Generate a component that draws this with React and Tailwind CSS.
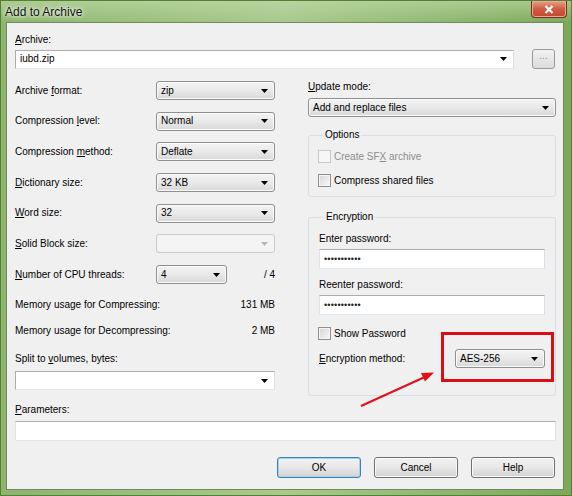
import React from "react"

const FONT = "font-['Liberation_Sans',Arial,sans-serif]"

function Arrow({ disabled }) {
  return (
    <svg width="7" height="4" viewBox="0 0 7 4" className="shrink-0">
      <path d="M0 0h7L3.5 4z" fill={disabled ? "#b5b5b5" : "#000"} />
    </svg>
  )
}

// drop list (read only) combo, Win7 look
function DropList({ value, className = "", disabled }) {
  return (
    <div
      className={`h-[19px] flex items-center justify-between pl-[4px] pr-[6px] rounded-[3px] border ${
        disabled
          ? "border-[#c9cbcd] bg-[#f4f4f4]"
          : "border-[#8e8f8f] bg-gradient-to-b from-[#f3f3f3] via-[#e9e9e9] to-[#d8d8d8] shadow-[inset_0_0_0_1px_#fbfbfb]"
      } ${className}`}
    >
      <span className="leading-[12px]">{value}</span>
      <Arrow disabled={disabled} />
    </div>
  )
}

// editable combo
function EditCombo({ value, className = "" }) {
  return (
    <div className={`h-[19px] flex items-center justify-between pl-[4px] pr-[6px] bg-white border border-[#abadb3] border-b-[#e3e9ef] border-r-[#dbdfe6] ${className}`}>
      <span className="leading-[12px]">{value}</span>
      <Arrow />
    </div>
  )
}

function TextBox({ value = "", className = "" }) {
  return (
    <div className={`h-[20px] flex items-center pl-[4px] bg-white border border-[#abadb3] border-b-[#e3e9ef] border-r-[#dbdfe6] border-l-[#e2e3ea] ${className}`}>
      <span className="text-[9px] tracking-[0.2px] leading-[10px] text-[#222]">{value}</span>
    </div>
  )
}

function Check({ label, disabled }) {
  return (
    <div className="h-[13px] flex items-center gap-[3px]">
      <div
        className={`w-[13px] h-[13px] border ${
          disabled
            ? "border-[#c8c8c8] bg-[#f6f6f6]"
            : "border-[#8e8f8f] bg-gradient-to-br from-[#d6d6d6] to-[#f8f8f8] shadow-[inset_0_0_0_1px_#f4f4f4]"
        }`}
      />
      <span className={`leading-[12px] ${disabled ? "text-[#8d8d8d]" : ""}`}>{label}</span>
    </div>
  )
}

function Button({ children, primary }) {
  return (
    <div
      className={`w-[84px] h-[21px] flex items-center justify-center rounded-[3px] border bg-gradient-to-b from-[#f2f2f2] via-[#e8e8e8] to-[#d2d2d2] ${
        primary ? "border-[#3c7fb1] shadow-[inset_0_0_0_1px_#9ed6f2]" : "border-[#707070] shadow-[inset_0_0_0_1px_#fafafa]"
      }`}
    >
      {children}
    </div>
  )
}

function Row({ label, children }) {
  return (
    <div className="h-[19px] flex items-center justify-between">
      <span className="leading-[12px]">{label}</span>
      {children}
    </div>
  )
}

export default function App() {
  return (
    <div className={`relative w-[572px] h-[496px] overflow-hidden ${FONT} text-[10px] text-black bg-gradient-to-r from-[#8db56d] via-[#a8ca8d] to-[#7ca858] border border-[#557f35]`}>
      {/* title bar */}
      <div className="h-[21px] flex items-start justify-between bg-gradient-to-b from-[#c2dbab]/60 to-transparent">
        <span className="pl-[4px] pt-[4px] text-[12px] leading-[14px] text-[#111] [text-shadow:0_0_6px_#fff,0_0_3px_#fff]">
          Add to Archive
        </span>
        <div className="mr-[4px] w-[36px] h-[17px] flex items-center justify-center rounded-b-[4px] border border-t-0 border-[#6e3024] bg-gradient-to-b from-[#e6a08d] via-[#cf5b43] to-[#c6452d] shadow-[inset_0_0_0_1px_#eba896]">
          <svg width="10" height="9" viewBox="0 0 10 9">
            <path d="M1.5 1l7 7M8.5 1l-7 7" stroke="#fff" strokeWidth="2.2" />
          </svg>
        </div>
      </div>

      {/* client area */}
      <div className="ml-[5px] mr-[7px] h-[468px] border border-[#6f8a63] bg-[#f0f0f0] pt-[11px] pl-[8px] pr-[7px]">
        <div className="leading-[12px]">
          <u>A</u>rchive:
        </div>
        <div className="mt-[3px] flex items-center">
          <EditCombo value="iubd.zip" className="flex-1" />
          <div className="ml-[18px] mr-[1px] w-[23px] h-[20px] flex items-start justify-center rounded-[3px] border border-[#9a9a9a] bg-gradient-to-b from-[#f2f2f2] to-[#dcdcdc] text-[#8a8a8a] leading-[12px]">
            ...
          </div>
        </div>

        <div className="mt-[12px] flex items-start">
          {/* left column */}
          <div className="w-[260px] flex flex-col">
            <div className="flex flex-col gap-[11.7px]">
              <Row label={<>Archive <u>f</u>ormat:</>}>
                <DropList value="zip" className="w-[119px]" />
              </Row>
              <Row label={<>Compression <u>l</u>evel:</>}>
                <DropList value="Normal" className="w-[119px]" />
              </Row>
              <Row label={<>Compression <u>m</u>ethod:</>}>
                <DropList value="Deflate" className="w-[119px]" />
              </Row>
              <Row label={<><u>D</u>ictionary size:</>}>
                <DropList value="32 KB" className="w-[119px]" />
              </Row>
              <Row label={<><u>W</u>ord size:</>}>
                <DropList value="32" className="w-[119px]" />
              </Row>
              <Row label={<><u>S</u>olid Block size:</>}>
                <DropList value="" disabled className="w-[119px]" />
              </Row>
              <div className="h-[19px] flex items-center">
                <span className="flex-1 leading-[12px]">
                  <u>N</u>umber of CPU threads:
                </span>
                <DropList value="4" className="w-[71px]" />
                <span className="w-[48px] text-right leading-[12px]">/ 4</span>
              </div>
            </div>
            <div className="mt-[15px] h-[12px] flex justify-between leading-[12px]">
              <span>Memory usage for Compressing:</span>
              <span>131 MB</span>
            </div>
            <div className="mt-[14px] h-[12px] flex justify-between leading-[12px]">
              <span>Memory usage for Decompressing:</span>
              <span>2 MB</span>
            </div>
            <div className="mt-[16px] leading-[12px]">
              Split to <u>v</u>olumes, bytes:
            </div>
            <EditCombo value="" className="mt-[6px]" />
          </div>

          {/* right column */}
          <div className="ml-[33px] w-[248px] flex flex-col">
            <div className="leading-[12px]">
              <u>U</u>pdate mode:
            </div>
            <DropList value="Add and replace files" className="mt-[5px]" />

            <fieldset className="mt-[12px] border border-[#d5dfe5] rounded-[3px] pl-[9px] pt-[9px] pb-[9px]">
              <legend className="ml-[5px] px-[2px] leading-[12px]">Options</legend>
              <div className="flex flex-col gap-[11px]">
                <Check disabled label={<>Create SF<u>X</u> archive</>} />
                <Check label="Compress shared files" />
              </div>
            </fieldset>

            <fieldset className="mt-[14px] border border-[#d5dfe5] rounded-[3px] px-[10px] pt-[10px] pb-[27px]">
              <legend className="ml-[5px] px-[2px] leading-[12px]">Encryption</legend>
              <div className="leading-[12px]">Enter password:</div>
              <TextBox value="•••••••••••" className="mt-[4px]" />
              <div className="mt-[10px] leading-[12px]">Reenter password:</div>
              <TextBox value="•••••••••••" className="mt-[4px]" />
              <div className="mt-[12px] -ml-[1px]">
                <Check label="Show Password" />
              </div>
              <div className="mt-[9px] h-[19px] flex items-center justify-between">
                <span className="leading-[12px]">
                  <u>E</u>ncryption method:
                </span>
                <div className="relative w-[90px]">
                  <DropList value="AES-256" />
                  <div className="absolute -left-[14px] -right-[9px] -top-[17px] -bottom-[14px] border-[3px] border-[#dd0d14]" />
                </div>
              </div>
            </fieldset>
          </div>
        </div>

        <div className="mt-[8px] leading-[12px]">
          <u>P</u>arameters:
        </div>
        <TextBox className="mt-[5px]" />

        <div className="mt-[16px] flex justify-end gap-[13px] pr-[1px]">
          <Button primary>OK</Button>
          <Button>Cancel</Button>
          <Button>Help</Button>
        </div>
      </div>

      {/* red annotation arrow */}
      <svg className="absolute left-0 top-0 pointer-events-none" width="572" height="496" viewBox="0 0 572 496">
        <line x1="360" y1="405" x2="426" y2="375" stroke="#e3101a" strokeWidth="2" />
        <polygon points="433,371.5 420,372 424,380.5" fill="#e3101a" />
      </svg>
    </div>
  )
}
